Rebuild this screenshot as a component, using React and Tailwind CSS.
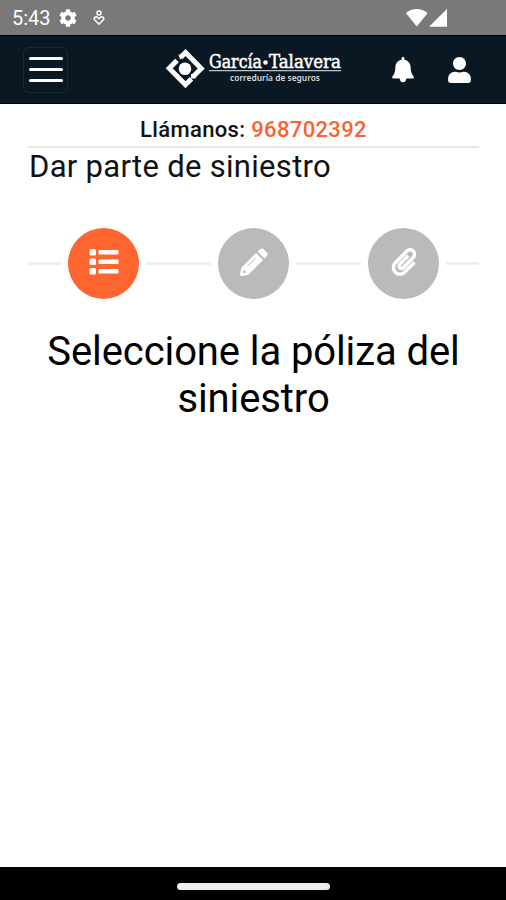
import { FaCog, FaPaperclip, FaUser } from 'react-icons/fa';

function ListIcon({ className }) {
    return (
        <svg className={className} viewBox="0 0 30 28" fill="currentColor">
            {[1, 10.5, 20].map(y => (
                <g key={y}>
                    <rect x="0.5" y={y} width="6.5" height="6.5" rx="1.5" />
                    <rect x="9.5" y={y + 1} width="20" height="4.5" rx="1" />
                </g>
            ))}
        </svg>
    );
}

function PencilIcon({ className }) {
    return (
        <svg className={className} viewBox="0 0 28 28" fill="currentColor">
            <path d="M16 5 23 12 8.100 26.900 1.600 28Q0 28 0 26.400L1.100 19.900Z" />
            <path d="M17.600 3.600 20.200 1.100Q21.800-.3 23.400 1.100L26.900 4.600Q28.300 6.200 26.900 7.800L24.400 10.400Z" />
            <path d="M7.800 18 15.500 10.300" stroke="#bababa" strokeWidth="1" strokeLinecap="round" />
            <path d="M3.300 22.500 5.300 22.800 5.600 24.700 3.900 25.200 2.900 24.200Z" fill="#bababa" />
        </svg>
    );
}

function BellIcon({ className }) {
    return (
        <svg className={className} viewBox="0 0 22 26" fill="currentColor">
            <path d="M9.600 1.500a1.400 1.400 0 0 1 2.800 0V2.700C16.300 3.400 18.400 6.300 18.600 10 18.800 14.500 19.500 17 21.500 19.200Q22.500 21.500 20.500 21.500H14.200A3.200 3.700 0 0 1 7.800 21.500H1.500Q-.5 21.500.5 19.200C2.500 17 3.200 14.500 3.400 10 3.600 6.300 5.700 3.400 9.600 2.700Z" />
        </svg>
    );
}

const steps = [
    { id: 'policy', icon: ListIcon, active: true },
    { id: 'details', icon: PencilIcon, active: false },
    { id: 'files', icon: FaPaperclip, active: false },
];

function StatusBar() {
    return (
        <div className="flex h-[35px] shrink-0 items-center bg-[#797979] pl-3 pr-[58px] text-white">
            <span className="w-[38px] whitespace-nowrap text-[20px] leading-none">5:43</span>
            <FaCog className="ml-[9px] size-[18px]" />
            <svg className="ml-4 h-4 w-3" viewBox="0 0 12 16" fill="none" stroke="currentColor" strokeWidth="1.5">
                <circle cx="6" cy="3" r="2" />
                <path d="M6 14.2 1.6 9.8C.4 8.2 2.6 5.8 4.4 7.2L6 8.7l1.6-1.5c1.8-1.4 4 1 2.8 2.6Z" />
            </svg>
            <svg className="ml-auto h-[18px] w-[42px]" viewBox="0 0 42 18" fill="currentColor">
                <path d="M0 4.3C6-1.3 15.500-1.300 21.500 4.300L10.800 17.500Z" />
                <path d="M41 0v17.800H23Z" />
            </svg>
        </div>
    );
}

function Logo() {
    return (
        <svg className="h-11 w-[178px]" viewBox="0 0 178 44" fill="#fff">
            <g fill="none" stroke="#fff" strokeWidth="5">
                <path d="M15.500 9.500 20.500 4.500 36.200 20.500 28 28.700" />
                <path d="M12 12.500 4.200 20.300 20.500 36.700 26.500 30.700" />
            </g>
            <path d="M13.500 6 15 11.500 18 9ZM26 25.500v5h5Z" />
            <circle cx="20" cy="20.700" r="6.300" />
            <g fontFamily="'DejaVu Serif Condensed', 'DejaVu Serif', serif" fontSize="19" stroke="#fff" strokeWidth="0.5">
                <text x="44" y="20" textLength="53" lengthAdjust="spacingAndGlyphs">García</text>
                <text x="104" y="20" textLength="72" lengthAdjust="spacingAndGlyphs">Talavera</text>
            </g>
            <circle cx="100.500" cy="14.500" r="2.300" />
            <path d="M44 22h132v1.300H44Z" fill="#b9c2c8" />
            <text x="65" y="32.500" fontFamily="'Noto Sans', sans-serif" fontSize="8.500" fontWeight="600" fill="#d5dade" textLength="90" lengthAdjust="spacingAndGlyphs">correduría de seguros</text>
        </svg>
    );
}

function Header() {
    return (
        <header className="flex h-[69px] shrink-0 items-center border-y border-black bg-[#091823] pl-[23px] pr-[35px] text-white">
            <button aria-label="Menú" className="flex h-[46px] w-[45px] flex-col items-center justify-center gap-2 rounded-md border border-[#1b2932]">
                <span className="h-[3px] w-[34px] rounded-sm bg-white" />
                <span className="h-[3px] w-[34px] rounded-sm bg-white" />
                <span className="h-[3px] w-[34px] rounded-sm bg-white" />
            </button>
            <div className="ml-[97px]">
                <Logo />
            </div>
            <button aria-label="Avisos" className="ml-auto">
                <BellIcon className="h-[26px] w-[22px]" />
            </button>
            <button aria-label="Usuario" className="ml-[34px]">
                <FaUser className="h-[26px] w-[23px]" />
            </button>
        </header>
    );
}

function Stepper() {
    return (
        <div className="mt-[43px] flex items-center gap-[7px]">
            <span className="h-[3px] w-[33px] bg-[#eeeeee]" />
            {steps.map((step, i) => (
                <div key={step.id} className={`flex items-center gap-[7px] ${i < 2 ? 'flex-1' : ''}`}>
                    <div className={`flex size-[71px] shrink-0 items-center justify-center rounded-full pb-[3px] text-white ${step.active ? 'bg-[#ff652f]' : 'bg-[#bababa]'}`}>
                        <step.icon className={step.active ? 'h-7 w-[30px]' : 'size-7'} />
                    </div>
                    {i < 2 && <span className="h-[3px] flex-1 bg-[#eeeeee]" />}
                </div>
            ))}
            <span className="h-[3px] w-[33px] bg-[#eeeeee]" />
        </div>
    );
}

export default function App() {
    return (
        <div className="flex h-screen flex-col bg-white font-['Roboto',sans-serif] text-[#111111]">
            <StatusBar />
            <Header />
            <main className="flex-1 pl-7 pr-[27px]">
                <p className="flex h-[44px] items-center justify-center border-b-2 border-[#e6e6e6] pt-2 text-[22px] font-medium tracking-[0.35px]">
                    <span>Llámanos: <a href="tel:968702392" className="text-[#fa6230]">968702392</a></span>
                </p>
                <h1 className="pl-px text-[31px] leading-[37px] tracking-[0.3px]">Dar parte de siniestro</h1>
                <Stepper />
                <h2 className="mt-[29px] text-center text-[40px] leading-[47px] tracking-[-0.1px] text-black">
                    Seleccione la póliza del siniestro
                </h2>
            </main>
            <div className="flex h-[33px] shrink-0 items-center justify-center bg-black pt-[5px]">
                <span className="h-[7px] w-[153px] rounded-full bg-[#eeeeee]" />
            </div>
        </div>
    );
}
